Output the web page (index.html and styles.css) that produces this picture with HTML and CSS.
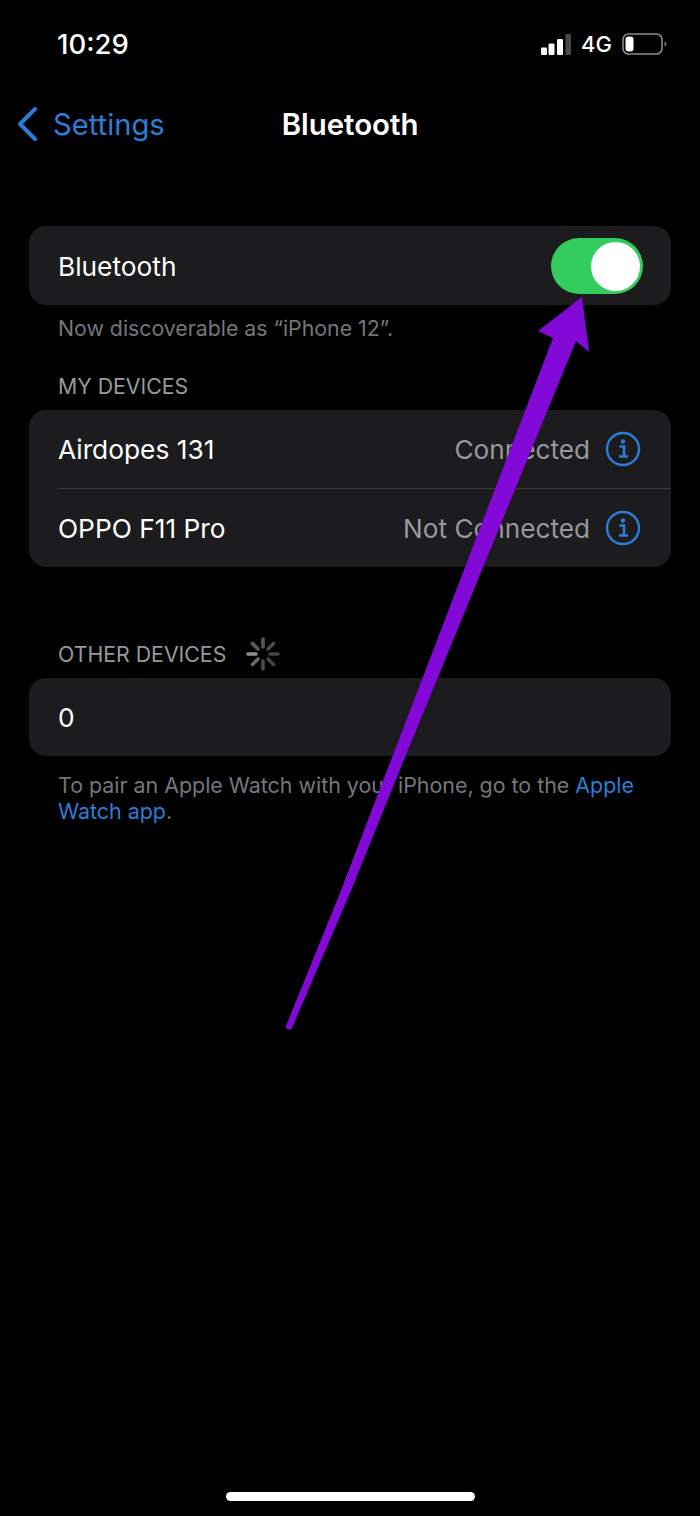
FILE: index.html
```html
<!DOCTYPE html>
<html lang="en">
<head>
    <meta charset="UTF-8">
    <meta name="viewport" content="width=device-width, initial-scale=1.0">
    <title>Bluetooth</title>
    <link rel="stylesheet" href="styles.css">
</head>
<body>
    <div class="screen">
        <div class="status-bar">
            <span class="clock">10:29</span>
            <div class="status-icons">
                <svg class="signal" width="30" height="26" viewBox="0 0 30 26">
                    <rect x="0" y="16.5" width="6" height="7.5" rx="1.2" fill="#fff"/>
                    <rect x="7.5" y="12.5" width="6" height="11.5" rx="1.2" fill="#fff"/>
                    <rect x="16" y="8" width="6" height="16" rx="1.2" fill="#fff"/>
                    <rect x="24.5" y="3" width="5.5" height="21" rx="1" fill="#4a4a4a"/>
                </svg>
                <span class="network">4G</span>
                <svg class="battery" width="46" height="24" viewBox="0 0 46 24">
                    <rect x="1" y="2" width="39" height="20" rx="5.5" fill="none" stroke="#8a8a8a" stroke-width="1.6"/>
                    <rect x="3.5" y="4.5" width="8" height="15" rx="3" fill="#fff"/>
                    <path d="M42.5 9.5c1.3.4 2 1.3 2 2.5s-.7 2.1-2 2.5z" fill="#777"/>
                </svg>
            </div>
        </div>

        <div class="nav-bar">
            <div class="back">
                <svg width="24" height="36" viewBox="0 0 24 36">
                    <path d="M20 3 5 18l15 15" fill="none" stroke="#2a7ed8" stroke-width="4" stroke-linecap="round" stroke-linejoin="round"/>
                </svg>
                <span>Settings</span>
            </div>
            <div class="nav-title">Bluetooth</div>
        </div>

        <div class="card first-card">
            <div class="row">
                <span class="row-label">Bluetooth</span>
                <div class="toggle"><div class="knob"></div></div>
            </div>
        </div>
        <div class="note discoverable">Now discoverable as “iPhone 12”.</div>

        <div class="section-title my-devices">MY DEVICES</div>
        <div class="card">
            <div class="row">
                <span class="row-label">Airdopes 131</span>
                <div class="row-right">
                    <span class="state">Connected</span>
                    <svg class="info" width="36" height="36" viewBox="0 0 36 36">
                        <circle cx="18" cy="18" r="16" fill="none" stroke="#2a7ed8" stroke-width="2.4"/>
                        <circle cx="18" cy="10.5" r="2.2" fill="#2a7ed8"/>
                        <path d="M14.5 15.5H19V25M14 25.5h9" fill="none" stroke="#2a7ed8" stroke-width="2.6"/>
                    </svg>
                </div>
            </div>
            <div class="divider"></div>
            <div class="row">
                <span class="row-label">OPPO F11 Pro</span>
                <div class="row-right">
                    <span class="state">Not Connected</span>
                    <svg class="info" width="36" height="36" viewBox="0 0 36 36">
                        <circle cx="18" cy="18" r="16" fill="none" stroke="#2a7ed8" stroke-width="2.4"/>
                        <circle cx="18" cy="10.5" r="2.2" fill="#2a7ed8"/>
                        <path d="M14.5 15.5H19V25M14 25.5h9" fill="none" stroke="#2a7ed8" stroke-width="2.6"/>
                    </svg>
                </div>
            </div>
        </div>

        <div class="section-title other-devices">
            <span>OTHER DEVICES</span>
            <svg width="36" height="36" viewBox="0 0 36 36" stroke-width="3.6" stroke-linecap="round">
                <path d="M18 3v8" stroke="#555"/>
                <path d="M28.6 7.4l-5.6 5.6" stroke="#4a4a4a"/>
                <path d="M33 18h-8" stroke="#444"/>
                <path d="M28.6 28.6 23 23" stroke="#444"/>
                <path d="M18 33v-8" stroke="#4c4c4c"/>
                <path d="M7.4 28.6 13 23" stroke="#666"/>
                <path d="M3 18h8" stroke="#8e8e8e"/>
                <path d="M7.4 7.4 13 13" stroke="#5c5c5c"/>
            </svg>
        </div>
        <div class="card">
            <div class="row">
                <span class="row-label">0</span>
            </div>
        </div>
        <div class="note pair-note">To pair an Apple Watch with your iPhone, go to the <a href="#">Apple Watch app</a>.</div>

        <div class="home-bar"></div>

        <!-- arrow drawn on top of the screenshot -->
        <svg class="arrow" width="700" height="1516" viewBox="0 0 700 1516">
            <polygon points="582,297 589,352 576,341 401,767 350,893 292,1028 286,1026 340,893 553,338 538,331" fill="#8209d8"/>
            <circle cx="289" cy="1026.5" r="3" fill="#8209d8"/>
        </svg>
    </div>
</body>
</html>
```

FILE: styles.css
```css
:root {
    --card: #1c1c1e;
    --blue: #2a7ed8;
    --muted: #76767a;
    --state: #98989d;
}

html, body {
    margin: 0;
    padding: 0;
    background: #000;
}

body {
    font-family: Inter, Roboto, "Liberation Sans", sans-serif;
    color: #fff;
}

.screen {
    position: relative;
    width: 700px;
    height: 1516px;
    overflow: hidden;
    background: #000;
}

.status-bar {
    display: flex;
    justify-content: space-between;
    align-items: center;
    height: 40px;
    padding: 24px 32px 0 57px;
}

.clock {
    font-size: 27.5px;
    font-weight: 500;
}

.status-icons {
    display: flex;
    align-items: center;
    gap: 10px;
}

.network {
    font-size: 22px;
    font-weight: 500;
}

.nav-bar {
    position: relative;
    display: flex;
    justify-content: center;
    align-items: center;
    height: 38px;
    margin-top: 41px;
}

.back {
    position: absolute;
    left: 15px;
    top: 1px;
    display: flex;
    align-items: center;
    gap: 14px;
    font-size: 29.2px;
    color: var(--blue);
}

.nav-title {
    font-size: 29.4px;
    font-weight: 600;
}

.card {
    margin: 0 29px;
    background: var(--card);
    border-radius: 17px;
}

.first-card {
    margin-top: 83px;
}

.row {
    display: flex;
    justify-content: space-between;
    align-items: center;
    box-sizing: border-box;
    height: 78px;
    padding: 0 29px;
}

.first-card .row {
    height: 79px;
    padding-top: 1px;
}

.row-label {
    font-size: 26.3px;
}

.row-right {
    display: flex;
    align-items: center;
    gap: 14.5px;
    margin-right: 1.5px;
}

.state {
    font-size: 26.2px;
    color: var(--state);
}

.divider {
    height: 1px;
    margin-left: 29px;
    background: #3a3a3c;
}

.toggle {
    display: flex;
    justify-content: flex-end;
    align-items: center;
    box-sizing: border-box;
    width: 92px;
    height: 56px;
    margin-right: -1px;
    padding: 0 3px;
    background: #32cd5c;
    border-radius: 28px;
}

.knob {
    width: 49px;
    height: 49px;
    background: #fff;
    border-radius: 50%;
}

.note {
    margin: 0 58px;
    font-size: 21.3px;
    line-height: 26px;
    color: var(--muted);
}

.note a {
    color: var(--blue);
    text-decoration: none;
}

.discoverable {
    margin-top: 10px;
}

.pair-note {
    margin-top: 16px;
    margin-right: 46px;
    font-size: 21.4px;
}

.section-title {
    display: flex;
    align-items: center;
    gap: 19px;
    height: 26px;
    margin: 0 58px 11px;
    font-size: 21.3px;
    color: var(--state);
}

.my-devices {
    margin-top: 32px;
}

.other-devices {
    margin-top: 74px;
}

.home-bar {
    position: absolute;
    left: 226px;
    bottom: 15px;
    width: 249px;
    height: 9px;
    background: #fff;
    border-radius: 5px;
}

.arrow {
    position: absolute;
    left: 0;
    top: 0;
}
```
